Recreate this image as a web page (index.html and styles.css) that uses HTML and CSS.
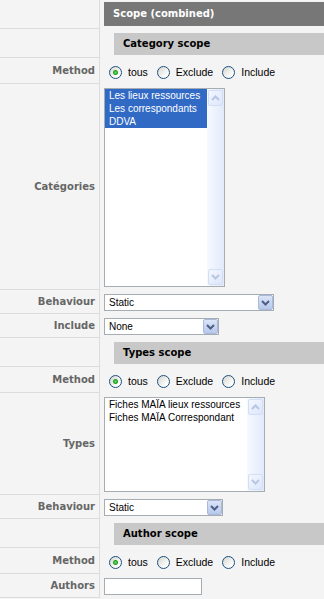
FILE: index.html
```html
<!DOCTYPE html>
<html lang="fr">
<head>
  <meta charset="UTF-8" />
  <meta name="viewport" content="width=device-width, initial-scale=1.0" />
  <title>Scope (combined)</title>
  <link rel="stylesheet" href="styles.css">
</head>
<body>
  <div class="form">
    <div class="label"></div>
    <div class="field first"><div class="title">Scope (combined)</div></div>

    <!-- category scope -->
    <div class="label"></div>
    <div class="field"><div class="subtitle">Category scope</div></div>

    <div class="label">Method</div>
    <div class="field">
      <div class="radios">
        <label><input type="radio" name="cat-method" checked>tous</label>
        <label><input type="radio" name="cat-method">Exclude</label>
        <label><input type="radio" name="cat-method">Include</label>
      </div>
    </div>

    <div class="label">Catégories</div>
    <div class="field">
      <div class="listbox cat">
        <div class="items">
          <div class="item selected">Les lieux ressources</div>
          <div class="item selected">Les correspondants</div>
          <div class="item selected">DDVA</div>
        </div>
        <div class="scrollbar">
          <span class="arrow"><svg width="9" height="6" viewBox="0 0 9 6"><path d="M1 5l3.5-3.5L8 5" stroke="#b7c6e3" stroke-width="2" fill="none"/></svg></span>
          <span class="arrow"><svg width="9" height="6" viewBox="0 0 9 6"><path d="M1 1l3.5 3.5L8 1" stroke="#b7c6e3" stroke-width="2" fill="none"/></svg></span>
        </div>
      </div>
    </div>

    <div class="label">Behaviour</div>
    <div class="field">
      <div class="combo long">
        <select><option>Static</option></select>
        <span class="drop"><svg width="9" height="6" viewBox="0 0 9 6"><path d="M1 1l3.5 3.5L8 1" stroke="#4d5f83" stroke-width="2" fill="none"/></svg></span>
      </div>
    </div>

    <div class="label">Include</div>
    <div class="field">
      <div class="combo short">
        <select><option>None</option></select>
        <span class="drop"><svg width="9" height="6" viewBox="0 0 9 6"><path d="M1 1l3.5 3.5L8 1" stroke="#4d5f83" stroke-width="2" fill="none"/></svg></span>
      </div>
    </div>

    <!-- types scope -->
    <div class="label"></div>
    <div class="field"><div class="subtitle">Types scope</div></div>

    <div class="label">Method</div>
    <div class="field">
      <div class="radios">
        <label><input type="radio" name="type-method" checked>tous</label>
        <label><input type="radio" name="type-method">Exclude</label>
        <label><input type="radio" name="type-method">Include</label>
      </div>
    </div>

    <div class="label">Types</div>
    <div class="field">
      <div class="listbox types">
        <div class="items">
          <div class="item">Fiches MAÏA lieux ressources</div>
          <div class="item">Fiches MAÏA Correspondant</div>
        </div>
        <div class="scrollbar">
          <span class="arrow"><svg width="9" height="6" viewBox="0 0 9 6"><path d="M1 5l3.5-3.5L8 5" stroke="#b7c6e3" stroke-width="2" fill="none"/></svg></span>
          <span class="arrow"><svg width="9" height="6" viewBox="0 0 9 6"><path d="M1 1l3.5 3.5L8 1" stroke="#b7c6e3" stroke-width="2" fill="none"/></svg></span>
        </div>
      </div>
    </div>

    <div class="label">Behaviour</div>
    <div class="field">
      <div class="combo medium">
        <select><option>Static</option></select>
        <span class="drop"><svg width="9" height="6" viewBox="0 0 9 6"><path d="M1 1l3.5 3.5L8 1" stroke="#4d5f83" stroke-width="2" fill="none"/></svg></span>
      </div>
    </div>

    <!-- author scope -->
    <div class="label"></div>
    <div class="field"><div class="subtitle">Author scope</div></div>

    <div class="label">Method</div>
    <div class="field">
      <div class="radios">
        <label><input type="radio" name="author-method" checked>tous</label>
        <label><input type="radio" name="author-method">Exclude</label>
        <label><input type="radio" name="author-method">Include</label>
      </div>
    </div>

    <div class="label">Authors</div>
    <div class="field">
      <input type="text" class="text">
    </div>
  </div>
</body>
</html>
```

FILE: styles.css
```css
body {
  margin: 0;
  background: #f4f4f4;
  font-family: "Liberation Sans", Arial, sans-serif;
  font-size: 10px;
  color: #000;
}
.form {
  display: grid;
  grid-template-columns: 100px 1fr;
}
.label {
  display: flex;
  align-items: center;
  justify-content: flex-end;
  padding-right: 4px;
  border-right: 1px solid #dcdcdc;
  border-bottom: 1px solid #dcdcdc;
  font-family: "DejaVu Sans", Verdana, sans-serif;
  font-weight: bold;
  font-size: 10px;
  color: #666;
}
.field {
  padding: 4px 0 3px 4px;
  min-width: 0;
}
.field.first {
  padding-top: 2px;
}
.title, .subtitle {
  font-family: "DejaVu Sans", Verdana, sans-serif;
  font-weight: bold;
  font-size: 10px;
  padding-left: 9px;
}
.title {
  height: 24px;
  line-height: 24px;
  background: #777;
  color: #fff;
}
.subtitle {
  height: 22px;
  line-height: 22px;
  margin-left: 10px;
  background: #c8c8c8;
  color: #000;
}
.radios {
  display: flex;
  align-items: center;
  height: 19px;
  padding-left: 5px;
  font-size: 10.5px;
}
.radios label {
  display: flex;
  align-items: center;
  gap: 6px;
  margin-right: 9px;
}
.radios input {
  appearance: none;
  width: 13px;
  height: 13px;
  margin: 2px 0 0;
  border: 1px solid #1c5180;
  border-radius: 50%;
  background: linear-gradient(135deg, #d6d6ce, #fff 80%);
}
.radios input:checked {
  background: radial-gradient(circle, #6fe06f 0, #21a121 2px, rgba(33,161,33,0) 3px), linear-gradient(135deg, #d6d6ce, #fff 80%);
}
.listbox {
  display: flex;
  box-sizing: border-box;
  border: 1px solid #a5acb2;
  background: #fff;
}
.listbox.cat {
  width: 121px;
  height: 199px;
}
.listbox.types {
  width: 161px;
  height: 95px;
}
.items {
  flex: 1;
  min-width: 0;
}
.item {
  line-height: 13px;
  padding-left: 4px;
  white-space: nowrap;
  overflow: hidden;
}
.item.selected {
  background: #316ac5;
  color: #fff;
}
.scrollbar {
  width: 17px;
  box-sizing: border-box;
  padding: 1px;
  display: flex;
  flex-direction: column;
  justify-content: space-between;
  background: linear-gradient(to right, #f6f9fe, #e2eafb);
}
.arrow {
  display: flex;
  align-items: center;
  justify-content: center;
  width: 15px;
  height: 16px;
  box-sizing: border-box;
  border: 1px solid #d3def5;
  border-radius: 2px;
  background: linear-gradient(135deg, #f4f7ff, #dce6fa);
}
.combo {
  display: flex;
  box-sizing: border-box;
  height: 17px;
  border: 1px solid #a5acb2;
  background: #fff;
}
.combo.long {
  width: 170px;
}
.combo.short {
  width: 115px;
}
.combo.medium {
  width: 119px;
}
.combo select {
  flex: 1;
  min-width: 0;
  appearance: none;
  border: 0;
  background: transparent;
  height: 15px;
  padding: 0 0 0 4px;
  font-family: "Liberation Sans", Arial, sans-serif;
  font-size: 10px;
  color: #000;
  outline: none;
}
.drop {
  display: flex;
  align-items: center;
  justify-content: center;
  width: 15px;
  height: 15px;
  box-sizing: border-box;
  border: 1px solid #a9b9dc;
  border-radius: 2px;
  background: linear-gradient(#dbe5f9, #b7c8ec);
}
.text {
  display: block;
  width: 98px;
  height: 17px;
  box-sizing: border-box;
  margin: 0;
  padding: 0 3px;
  border: 1px solid #a5acb2;
  background: #fff;
}
```
